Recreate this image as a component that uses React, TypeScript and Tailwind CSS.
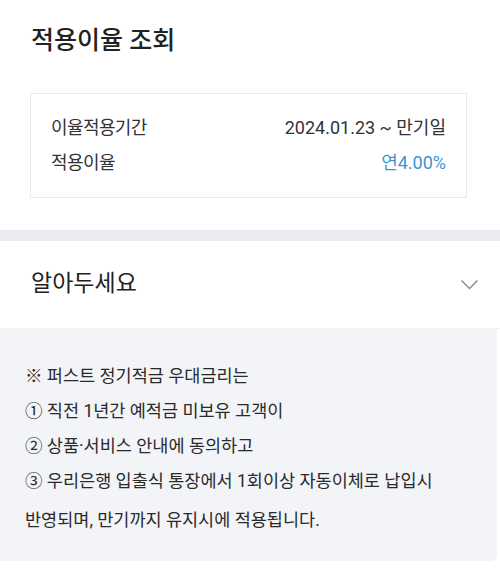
const notes = [
  "※ 퍼스트 정기적금 우대금리는",
  "① 직전 1년간 예적금 미보유 고객이",
  "② 상품·서비스 안내에 동의하고",
  "③ 우리은행 입출식 통장에서 1회이상 자동이체로 납입시",
];

function ChevronDown() {
  return (
    <svg width="19" height="12" viewBox="0 0 19 12" fill="none">
      <path d="M1.5 1.5 L9.5 9.5 L17.5 1.5" stroke="#8a8d93" strokeWidth="1.5" />
    </svg>
  );
}

export default function App() {
  return (
    <div
      className="w-[500px] h-[570px] bg-white text-[#222]"
      style={{ fontFamily: 'Roboto, "Noto Sans CJK KR", sans-serif' }}
    >
      {/* rate summary */}
      <section className="pt-[25px] pb-[32px] pl-[30px] pr-[33px]">
        <h1 className="pl-[1px] text-[25px] leading-[32px] font-medium text-[#222]">적용이율 조회</h1>
        <div className="mt-[36px] border border-[#e9ebee] pl-[20px] pr-[20px] pt-[16px] pb-[17px] text-[18px] leading-[35px] text-[#333]">
          <div className="flex justify-between">
            <span className="tracking-[-0.6px]">이율적용기간</span>
            <span>2024.01.23 ~ 만기일</span>
          </div>
          <div className="flex justify-between">
            <span className="tracking-[-0.6px]">적용이율</span>
            <span className="text-[#3f93d4]">연4.00%</span>
          </div>
        </div>
      </section>

      <div className="h-[11px] bg-[#e9ebee]" />

      {/* notice accordion */}
      <section className="h-[88px] flex items-center justify-between pl-[31px] pr-[21px] border-b border-[#eef0f3]">
        <span className="text-[23px] text-[#222]">알아두세요</span>
        <ChevronDown />
      </section>

      <div className="mr-[3px] rounded-br-md bg-[#f2f4f8] pl-[25px] pt-[30px] pb-[23px] text-[17.5px] leading-[35px] text-[#2a2a2a]">
        {notes.map((line) => (
          <p key={line}>{line}</p>
        ))}
        <p className="mt-[4px]">반영되며, 만기까지 유지시에 적용됩니다.</p>
      </div>
    </div>
  );
}
